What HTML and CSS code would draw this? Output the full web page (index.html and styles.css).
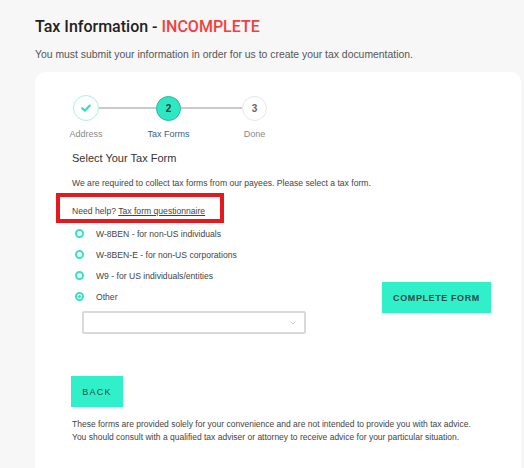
FILE: index.html
```html
<!DOCTYPE html>
<html lang="en">
<head>
    <meta charset="UTF-8" />
    <title>Tax Information</title>
    <link rel="stylesheet" href="styles.css">
</head>
<body>

<div class="page">
    <h1 class="title">Tax Information - <span class="status">INCOMPLETE</span></h1>
    <p class="intro">You must submit your information in order for us to create your tax documentation.</p>

    <div class="card">

        <!-- Stepper -->
        <div class="stepper">
            <div class="step-circle done">
                <svg width="12" height="12" viewBox="0 0 12 12">
                    <path d="M2.2 6.2 L4.9 8.7 L9.8 3.6" fill="none" stroke="#2ee0bf" stroke-width="2.2" stroke-linecap="round" stroke-linejoin="round"/>
                </svg>
            </div>
            <div class="step-line"></div>
            <div class="step-circle active">2</div>
            <div class="step-line"></div>
            <div class="step-circle">3</div>

            <div class="step-label col-1">Address</div>
            <div class="step-label col-3 current">Tax Forms</div>
            <div class="step-label col-5">Done</div>
        </div>

        <h2 class="section-title">Select Your Tax Form</h2>
        <p class="text">We are required to collect tax forms from our payees. Please select a tax form.</p>

        <div class="help">Need help? <a href="#" class="help-link">Tax form questionnaire</a></div>

        <div class="form-row">
            <div class="options">
                <label class="option"><span class="radio"></span>W-8BEN - for non-US individuals</label>
                <label class="option"><span class="radio"></span>W-8BEN-E - for non-US corporations</label>
                <label class="option"><span class="radio"></span>W9 - for US individuals/entities</label>
                <label class="option"><span class="radio checked"></span>Other</label>

                <div class="select">
                    <svg width="6" height="4" viewBox="0 0 6 4">
                        <path d="M0.5 0.5 L3 3 L5.5 0.5" fill="none" stroke="#bbb" stroke-width="0.8"/>
                    </svg>
                </div>
            </div>

            <button class="btn btn-complete">COMPLETE FORM</button>
        </div>

        <button class="btn btn-back">BACK</button>

        <p class="disclaimer">These forms are provided solely for your convenience and are not intended to provide you with tax advice.<br>
        You should consult with a qualified tax adviser or attorney to receive advice for your particular situation.</p>
    </div>
</div>

</body>
</html>
```

FILE: styles.css
```css
body {
    margin: 0;
    background: #f7f7f7;
    font-family: "Liberation Sans", Arial, sans-serif;
    color: #333;
}

.page {
    padding: 17px 3px 0 35px;
}

.title {
    margin: 0;
    font-family: Roboto, "Liberation Sans", sans-serif;
    font-size: 16px;
    font-weight: 500;
    line-height: 20px;
    color: #222;
}

.status {
    color: #f2403f;
}

.intro {
    margin: 11px 0 0;
    font-size: 10.4px;
    line-height: 14px;
    color: #555;
}

.card {
    margin-top: 10px;
    background: #fff;
    border-radius: 10px;
    padding: 23px 30px 40px 37px;
}

/* Stepper */
.stepper {
    display: grid;
    grid-template-columns: 26px 57px 25px 61px 25px;
    align-items: center;
    margin-left: 1px;
}

.step-circle {
    width: 25px;
    height: 25px;
    box-sizing: border-box;
    border-radius: 50%;
    border: 1px solid #e6e6e6;
    background: #fff;
    display: flex;
    align-items: center;
    justify-content: center;
    font-size: 10px;
    font-weight: bold;
    color: #666;
}

.step-circle.done {
    width: 26px;
    height: 26px;
    border-color: #a8f2e2;
}

.step-circle.active {
    background: #2ee8c4;
    border-color: #27b99c;
    color: #1f3a36;
}

.step-line {
    height: 2px;
    background: #c9c9c9;
}

.step-label {
    grid-row: 2;
    justify-self: center;
    white-space: nowrap;
    margin-top: 7px;
    font-size: 9px;
    line-height: 12px;
    color: #8a8a8a;
}

.step-label.current {
    color: #3a5f8c;
}

.col-1 { grid-column: 1; }
.col-3 { grid-column: 3; }
.col-5 { grid-column: 5; }

.section-title {
    margin: 11px 0 0;
    font-size: 11px;
    font-weight: normal;
    line-height: 14px;
    color: #333;
}

.text {
    margin: 12px 0 0;
    font-size: 8.6px;
    line-height: 12px;
    color: #444;
}

/* Red highlight around the help line */
.help {
    width: 168px;
    box-sizing: border-box;
    height: 30px;
    margin: 4px 0 0 -16px;
    border: 4px solid #e5191d;
    padding: 8px 12px 0;
    font-size: 8.6px;
    line-height: 12px;
    white-space: nowrap;
    color: #444;
}

.help-link {
    color: #444;
}

.form-row {
    display: flex;
    align-items: flex-start;
}

.options {
    width: 240px;
}

.option {
    display: flex;
    align-items: center;
    height: 21px;
    font-size: 8.6px;
    color: #444;
}

.radio {
    width: 9px;
    height: 9px;
    box-sizing: border-box;
    border: 2px solid #33e3c2;
    border-radius: 50%;
    margin: 0 12px 0 3px;
    display: flex;
    align-items: center;
    justify-content: center;
}

.radio.checked::after {
    content: "";
    width: 3px;
    height: 3px;
    border-radius: 50%;
    background: #33e3c2;
}

.select {
    margin: 4px 0 0 10px;
    width: 224px;
    height: 23px;
    box-sizing: border-box;
    border: 2px solid #dadada;
    border-radius: 2px;
    display: flex;
    align-items: center;
    justify-content: flex-end;
    padding-right: 8px;
}

.btn {
    border: none;
    background: #30f0c9;
    color: #2b4b47;
    font-family: "Liberation Sans", Arial, sans-serif;
    font-size: 9px;
    letter-spacing: 1.3px;
    cursor: pointer;
}

.btn-complete {
    margin: 59px 0 0 auto;
    width: 109px;
    height: 31px;
    font-weight: bold;
    letter-spacing: 0.6px;
}

.btn-back {
    display: block;
    margin: 42px 0 0 -1px;
    width: 52px;
    height: 31px;
}

.disclaimer {
    margin: 11px 0 0;
    font-size: 8.5px;
    line-height: 13px;
    color: #444;
}
```
